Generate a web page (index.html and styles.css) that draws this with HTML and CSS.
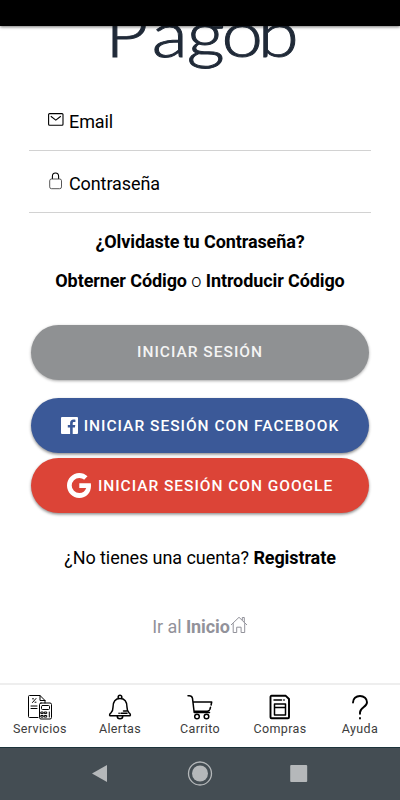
FILE: index.html
```html
<!DOCTYPE html>
<html lang="es">
<head>
<meta charset="utf-8">
<meta name="viewport" content="width=device-width">
<title>Pagob</title>
<link rel="stylesheet" href="styles.css">
</head>
<body>
<div class="screen">
  <header class="status"></header>
  <main class="content">
    <div class="brand"><svg width="200" height="86" viewBox="0 0 200 86"><text class="brand-text" transform="scale(1.18 1)" x="4.500 43.800 73.600 102.900 133.800" y="57">Pagob</text></svg></div>
    <form class="form">
      <div class="field">
        <svg class="mail" width="16" height="13" viewBox="0 0 16 13"><rect x=".6" y=".6" width="14.4" height="11.6" rx="1"/><path d="M2.8 3.2 7.8 7.1l5-3.9"/></svg>
        <span>Email</span>
      </div>
      <div class="field">
        <svg class="lock" width="16" height="18" viewBox="0 0 16 18"><path d="M4.4 7V4.3C4.4 2.4 5.7 1 7.5 1s3.1 1.4 3.1 3.3V7"/><rect class="lock-body" x="1.7" y="7" width="11.8" height="9.7" rx="1.8"/></svg>
        <span>Contraseña</span>
      </div>
    </form>
    <p class="forgot"><b>¿Olvidaste tu Contraseña?</b></p>
    <p class="codes"><b>Obterner Código</b> <span class="light">o</span> <b>Introducir Código</b></p>
    <div class="buttons">
      <div class="btn login">INICIAR SESIÓN</div>
      <div class="btn facebook">
        <svg width="17" height="17" viewBox="0 0 17 17"><path fill="#fff" fill-rule="evenodd" d="M1 0h15a1 1 0 0 1 1 1v15a1 1 0 0 1-1 1h-4.300v-6.500h2.200l.4-2.600h-2.600V6.200c0-.8.4-1.200 1.300-1.200h1.400V2.700c-.4-.1-1.100-.2-1.900-.2-2.100 0-3.400 1.200-3.400 3.500v1.900H6.800v2.600h2.300V17H1a1 1 0 0 1-1-1V1a1 1 0 0 1 1-1z"/></svg>
        <span>INICIAR SESIÓN CON FACEBOOK</span>
      </div>
      <div class="btn google">
        <svg width="24" height="25" viewBox="0 0 24 25"><path fill="#fff" d="M12.3 10.2v4.7h6.9c-.9 3.1-3.4 5.2-6.9 5.2a7.6 7.6 0 1 1 0-15.2c1.9 0 3.5.7 4.8 1.9l3.4-3.5A12.4 12.4 0 0 0 12.3 0C5.5 0 0 5.6 0 12.5S5.500 25 12.300 25C19.300 25 24 20.100 24 12.800c0-.9-.1-1.800-.2-2.600z"/></svg>
        <span>INICIAR SESIÓN CON GOOGLE</span>
      </div>
    </div>
    <p class="register">¿No tienes una cuenta? <b>Registrate</b></p>
    <p class="home">Ir al <b>Inicio</b><svg width="18" height="18" viewBox="0 0 18 18"><path d="M1 9 9 1.300l8 7.700M3.200 7.200v9.300h3.500v-5.300h4.400v5.300h3.600V7.200M12.300 4V1.500h2v4.800"/></svg></p>
  </main>
  <nav class="tabs">
    <div class="tab"><svg width="26" height="26" viewBox="0 0 26 26"><g class="fine"><path d="M11 23.500H2.500a1 1 0 0 1-1-1V2.500a1 1 0 0 1 1-1H13l5 5v2.500M13 1.500v5h5"/><path d="m5.500 8.500 3.500-4M5.500 4.800h1M8 8.200h1M4 12h6M4 14.500h6"/><rect x="12.500" y="9" width="12" height="16" rx="1.500"/><rect x="14.500" y="11.500" width="8" height="4" rx="1"/><rect x="14.200" y="18" width="2" height="1.600"/><rect x="17.700" y="18" width="2" height="1.600"/><rect x="14.200" y="21.500" width="2" height="1.600"/><rect x="17.700" y="21.500" width="2" height="1.600"/><path d="M22.300 18v5"/></g></svg><span>Servicios</span></div>
    <div class="tab"><svg width="26" height="26" viewBox="0 0 26 26"><path d="M11.200 4.500V3a1.800 1.800 0 0 1 3.600 0v1.500M3 21.800c-1-1 0-2.200 1-3 1.500-1.300 2-3 2-5.500 0-5.300 2.500-8.800 7-8.800s7 3.500 7 8.800c0 2.500.5 4.200 2 5.500 1 .8 2 2 1 3zM10.200 22c0 1.700 1 2.800 2.800 2.800s2.800-1.100 2.800-2.800M16.500 17h3M14 19.300h6M12 19.300h.2"/></svg><span>Alertas</span></div>
    <div class="tab"><svg width="26" height="26" viewBox="0 0 26 26"><path d="M1 1.800h1.200c2 0 2.900.7 3.300 2.500l1.700 14.200h15.300M6 8h18.700l-.6 3M23.500 13.200l-.6 2M7.500 17.200h13.200l1.600-.9"/><circle cx="10" cy="22.500" r="2.300"/><circle cx="19.500" cy="22.500" r="2.300"/></svg><span>Carrito</span></div>
    <div class="tab"><svg width="26" height="26" viewBox="0 0 26 26"><path class="thick" d="M4.500 1.800h14.300l3.200 3.200v18.200a1 1 0 0 1-1 1H4.500a1 1 0 0 1-1-1V2.800a1 1 0 0 1 1-1z"/><path d="M7 6h7.500M16.800 6h.4M7.500 10h11v11h-11zM7.500 13.500h11"/></svg><span>Compras</span></div>
    <div class="tab"><svg width="26" height="26" viewBox="0 0 26 26"><path class="thick" d="M6 8.500C6 4.500 9 2 13 2s7 2.700 7 6.200c0 5-7 5.300-7 10.300v1.200M13 24v.6"/></svg><span>Ayuda</span></div>
  </nav>
  <footer class="system">
    <svg width="18" height="20" viewBox="0 0 18 20"><path d="M15 1v17L0 9.500z"/></svg>
    <svg width="26" height="26" viewBox="0 0 26 26"><circle cx="13" cy="12.500" r="11.500" class="ring"/><circle cx="13" cy="12.500" r="8"/></svg>
    <svg width="18" height="18" viewBox="0 0 18 18"><rect x=".2" y="0" width="17" height="17" rx="1"/></svg>
  </footer>
</div>
</body>
</html>
```
FILE: styles.css
```css
* { box-sizing: border-box; }
body { margin: 0; background: #fff; font-family: Roboto, sans-serif; color: #000; }
p { margin: 0; }
b { font-weight: 700; letter-spacing: -.1px; }
.light { font-weight: 300; }
.screen { width: 400px; height: 800px; display: flex; flex-direction: column; overflow: hidden; }
.status { height: 26px; flex: none; background: #000; box-shadow: 0 1px 3px rgba(0,0,0,.55); z-index: 1; }
.content { height: 657px; flex: none; display: flex; flex-direction: column; overflow: hidden; font-size: 18px; line-height: 24px; letter-spacing: -.07px; }
.brand { height: 86px; margin-top: -26px; margin-left: 100px; flex: none; }
.brand svg { display: block; }
.brand-text { font: 300 63px Lato, sans-serif; letter-spacing: 0; fill: #202a38; stroke: #202a38; stroke-width: .9; }
.form { margin: 3px 29px 0; }
.field { height: 62px; padding: 21px 0 0 19px; display: flex; align-items: flex-start; gap: 5px; border-bottom: 1px solid #d2d2d2; letter-spacing: -.1px; }
.field svg { fill: none; stroke: #000; stroke-width: 1.1; }
.field .mail { margin-top: 3px; }
.field .lock { margin-top: 0; }
.field .lock-body { stroke: #444; stroke-width: .9; }
.forgot, .codes, .register, .home { text-align: center; }
.forgot { margin-top: 17px; }
.codes { margin-top: 15px; }
.buttons { margin: 31.5px 31px 0; }
.btn { height: 55.5px; border-radius: 28px; display: flex; align-items: center; justify-content: center; color: #fff; font-size: 15.5px; font-weight: 500; letter-spacing: 1px; box-shadow: 0 1.5px 3px rgba(0,0,0,.45); }
.btn span { margin-top: 1px; }
.login { background: #8f9193; margin-bottom: 17.5px; color: #f4f4f4; box-shadow: 0 1px 3px rgba(0,0,0,.35); }
.facebook { background: #3b5998; margin-bottom: 4.5px; gap: 6px; }
.google { background: #dc4437; gap: 7px; letter-spacing: .97px; }
.register { margin-top: 32.5px; }
.home { margin-top: 45px; color: #92929a; }
.home svg { fill: none; stroke: #92929a; stroke-width: 1; vertical-align: -1px; }
.tabs { height: 64px; flex: none; border-top: 2px solid #eee; display: flex; }
.tab { flex: 1; display: flex; flex-direction: column; align-items: center; padding-top: 9px; font-size: 12.5px; line-height: 16px; color: #3c3c3c; letter-spacing: .35px; }
.tab svg { fill: none; stroke: #000; stroke-width: 1.5; stroke-linecap: round; stroke-linejoin: round; }
.tab .fine { stroke-width: 1; }
.tab .thick { stroke-width: 1.9; }
.tab span { margin-top: 1px; }
.system { height: 53px; flex: none; background: #444d53; border-top: 1px solid #1d343b; display: grid; grid-template-columns: repeat(3, 99px); justify-content: center; align-items: center; justify-items: center; fill: #b5b8ba; }
.ring { fill: none; stroke: #b5b8ba; stroke-width: 1.3; }
```
